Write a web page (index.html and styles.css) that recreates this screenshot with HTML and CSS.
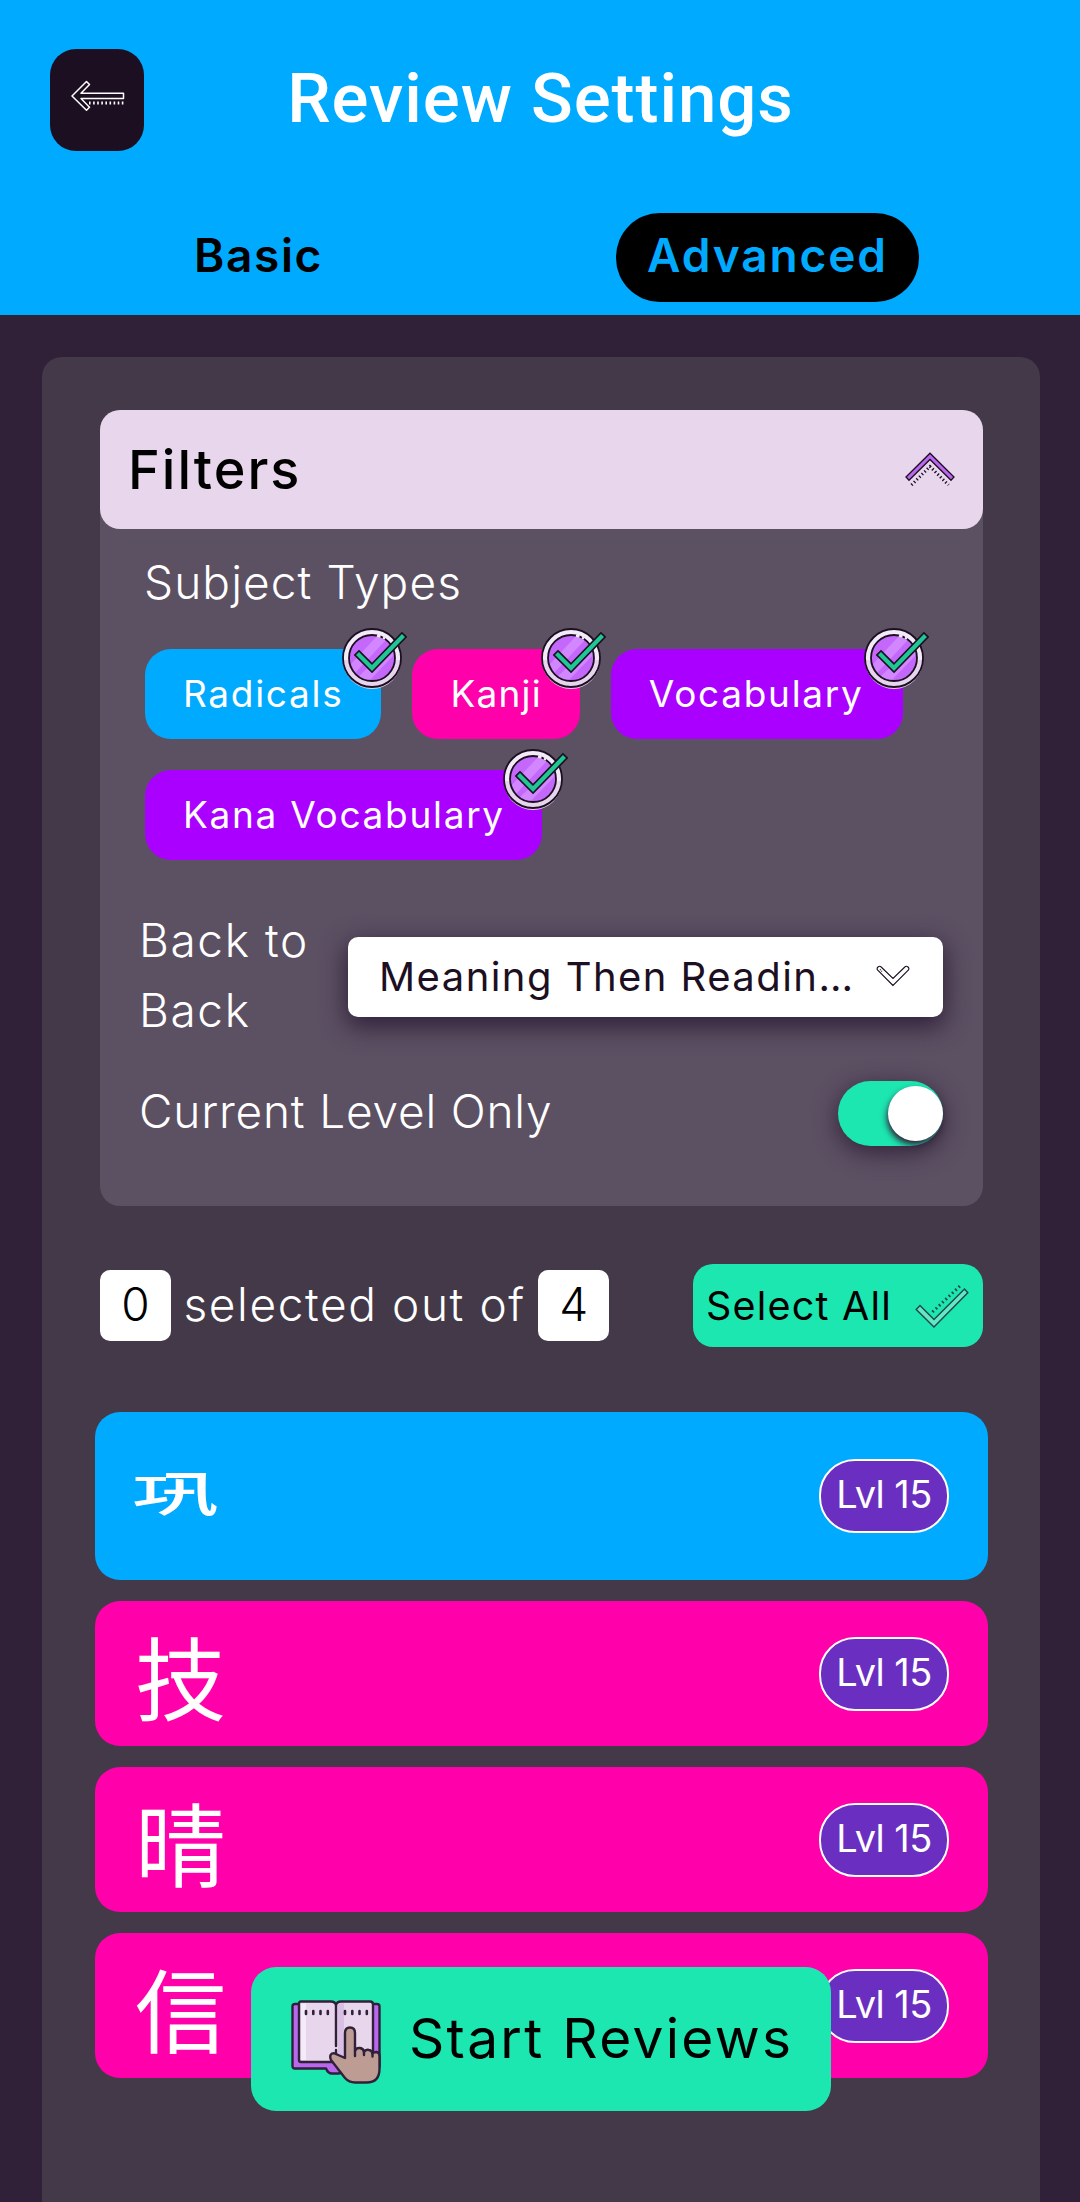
FILE: index.html
```html
<!DOCTYPE html>
<html lang="en">
<head>
<meta charset="utf-8">
<title>Review Settings</title>
<link rel="stylesheet" href="styles.css">
</head>
<body>
<svg class="defs" aria-hidden="true">
  <symbol id="badge" viewBox="0 0 66 62">
    <circle cx="31" cy="31" r="29" fill="#f3ebf7"/>
    <path d="M2 33a29 29 0 0 0 58 0z" fill="#e6d5ed"/>
    <circle cx="31" cy="31" r="29" fill="none" stroke="#1c0f22" stroke-width="1.8"/>
    <circle cx="31" cy="31" r="23" fill="#c468fb"/>
    <path d="M10 37 36 9l9 4-31 33zM17 50 51 18l3 9-26 27z" fill="#d286ff"/>
    <circle cx="31" cy="31" r="23" fill="none" stroke="#1c0f22" stroke-width="1.8"/>
    <path d="M36 8.500l3.500 1M42 10.500l2 1.200" stroke="#f3ebf7" stroke-width="2.500"/>
    <path d="M18 28 31 41 61 10" fill="none" stroke="#1c0f22" stroke-width="7.500" stroke-linecap="square"/>
    <path d="M18 28 31 41 61 10" fill="none" stroke="#1fc795" stroke-width="4.200" stroke-linecap="square"/>
  </symbol>
</svg>

<header class="header">
  <div class="topbar">
    <button class="back" aria-label="Back">
      <svg width="54" height="32" viewBox="0 0 54 32" fill="none" stroke="#fff" stroke-width="1.500" stroke-linejoin="round">
        <path d="M1 16 15.500 1.500l3 3L10 13.300h42.500v5.200H10l8.500 8.700-3 3z"/>
        <path d="M18 23h35" stroke-width="3" stroke-dasharray="1.600 2.500"/>
      </svg>
    </button>
    <h1 class="title">Review Settings</h1>
  </div>
  <nav class="tabs">
    <a class="tab basic">Basic</a>
    <a class="tab active">Advanced</a>
  </nav>
</header>

<main class="page">
  <section class="panel">
    <div class="filters">
      <div class="filters-head">
        <h2>Filters</h2>
        <svg width="50" height="36" viewBox="0 0 50 36" fill="none" stroke="#1c0f22">
          <path d="M1 25 25 1.200 49 25l-3 3.200L25 7.500 4 28.200z" fill="#b968ee" stroke-width="1.300"/>
          <path d="M6.500 33 25 14.500 43.500 33" stroke-width="3" stroke-dasharray="1.300 2.400"/>
        </svg>
      </div>
      <h3>Subject Types</h3>
      <div class="chips">
        <span class="chip radical">Radicals<svg class="badge"><use href="#badge"/></svg></span>
        <span class="chip kanji">Kanji<svg class="badge"><use href="#badge"/></svg></span>
        <span class="chip vocab">Vocabulary<svg class="badge"><use href="#badge"/></svg></span>
        <span class="chip vocab">Kana Vocabulary<svg class="badge"><use href="#badge"/></svg></span>
      </div>
      <div class="option b2b">
        <span class="label">Back to Back</span>
        <div class="select">
          <span>Meaning Then Readin…</span>
          <svg width="34" height="22" viewBox="0 0 34 22" fill="none" stroke="#1c0f22" stroke-width="1.100">
            <path d="M17 20.500 1.500 5Q.500 3.500 2 2q1.800-1.500 3.200 0L17 13.500 28.800 2q1.400-1.500 3.200 0 1.500 1.500.500 3z"/>
            <path d="M4 4.500l2 2" stroke-dasharray="1 1"/>
          </svg>
        </div>
      </div>
      <div class="option level">
        <span class="label">Current Level Only</span>
        <span class="toggle"><i></i></span>
      </div>
    </div>

    <div class="summary">
      <span class="count">0</span>
      <span class="summary-text">selected out of</span>
      <span class="count">4</span>
      <button class="select-all"><span>Select All</span>
        <svg width="54" height="46" viewBox="0 0 54 46" fill="none" stroke="#1f4a4c" stroke-width="1.500">
          <path d="M1.200 26.500 5 22.500 19 36.500 49.500 6l3.300 3.800L19 44z" fill="#63e8c4"/>
          <path d="M17.500 29 46.500 1.500" stroke-width="3" stroke-dasharray="1.700 2.800"/>
        </svg>
      </button>
    </div>

    <ul class="subjects">
      <li class="subject radical tall"><span class="glyph squat" lang="ja">巩</span><span class="lvl">Lvl 15</span></li>
      <li class="subject kanji"><span class="glyph" lang="ja">技</span><span class="lvl">Lvl 15</span></li>
      <li class="subject kanji"><span class="glyph" lang="ja">晴</span><span class="lvl">Lvl 15</span></li>
      <li class="subject kanji"><span class="glyph" lang="ja">信</span><span class="lvl">Lvl 15</span></li>
    </ul>
  </section>
</main>

<button class="start">
  <svg width="90" height="84" viewBox="0 0 90 84" stroke="#302139" stroke-width="2.400" stroke-linejoin="round" stroke-linecap="round">
    <path d="M4 4h82q2.500 0 2.500 2.500V66q0 2.500-2.500 2.500H53q-2 5-6 5h-6q-4 0-6-5H4Q1.500 68.500 1.500 66V6.500Q1.500 4 4 4z" fill="#b968ee"/>
    <path d="M10 1.500h30q4 0 5 3.500 1-3.500 5-3.500h29q3 0 3 3V62H10q-2 0-2-2V4q0-2.500 2-2.500z" fill="#e8d6ed"/>
    <path d="M10 3.500h5V60h-5z" fill="#f3ebf7" stroke="none"/>
    <path d="M47 5q1-2 6-2v58h-6z" fill="#d9bfe4" stroke="none"/>
    <path d="M45 5v41M45 50v12" fill="none"/>
    <path d="M15 11v3M22.300 11v3M29.500 11v3M36.800 11v3M54 11v3M61.300 11v3M68.500 11v3M75.800 11v3" fill="none" stroke-width="2.600"/>
    <path d="M54 58V33q0-5.500 5-5.500T64 33v18q1-3.500 5-3 3.500.500 4 4 1.500-3 5-2 3 .500 3.500 3.500 1-1.500 4-1.500 3 .500 3 4v13q0 13.500-13 13.500H64q-6 0-10-4.500L40 60q-2-4.500 1-6.500 2.500-1 5 1z" fill="#bd9c94"/>
    <path d="M64 51v5M73 52v3M81.500 53.500v3" fill="none"/>
  </svg>
  <span>Start Reviews</span>
</button>
</body>
</html>
```
FILE: styles.css
```css
* { box-sizing: border-box; }

body {
  margin: 0;
  min-height: 2202px;
  display: flex;
  flex-direction: column;
  background: #302139;
  color: #fff;
  font-family: Inter, "Noto Sans CJK JP", sans-serif;
}

h1, h2, h3, ul { margin: 0; padding: 0; }
button { border: 0; padding: 0; font: inherit; color: inherit; }
svg { display: block; flex: none; }
.defs { position: absolute; width: 0; height: 0; }

.header { height: 315px; background: #0af; }

.topbar {
  display: grid;
  grid-template-columns: 94px 1fr 94px;
  padding: 49px 50px 0;
  height: 213px;
  align-items: start;
}

.back {
  height: 102px;
  border-radius: 26px;
  background: #1c0f22;
  display: flex;
  align-items: center;
  justify-content: center;
  padding: 0 0 8px 1px;
}

.title {
  font: 500 69px/100px Roboto, sans-serif;
  letter-spacing: .95px;
  text-align: center;
  padding-left: 1px;
}

.tabs {
  display: grid;
  grid-template-columns: 509px 509px;
  justify-items: center;
  padding-left: 4px;
}

.tab {
  height: 89px;
  line-height: 85px;
  padding: 0 32px;
  border-radius: 44px;
  font-size: 46px;
  font-weight: 600;
  color: #000;
  letter-spacing: 1.6px;
}

.tab.active { background: #000; color: #0af; letter-spacing: 1.9px; padding: 0 31.5px; }

.page { flex: 1; padding: 42px 40px 0 42px; display: flex; }

.panel {
  flex: 1;
  padding: 53px 57px 0 58px;
  background: #433948;
  border-radius: 20px 20px 0 0;
}

.filters {
  background: #5c5063;
  border-radius: 20px;
  padding-bottom: 60px;
}

.filters-head {
  display: flex;
  align-items: center;
  justify-content: space-between;
  height: 119px;
  padding: 0 28px;
  border-radius: 20px;
  background: #e8d6ed;
  color: #000;
}

.filters-head h2 { font-size: 54px; font-weight: 500; letter-spacing: 2px; }

.filters h3 {
  margin: 18px 0 32px 44px;
  font-size: 46px;
  font-weight: 300;
  line-height: 70px;
  letter-spacing: 1.1px;
}

.chips { display: flex; flex-wrap: wrap; gap: 31px; padding: 0 45px; }

.chip {
  position: relative;
  height: 90px;
  line-height: 89px;
  padding: 0 37px 0 38px;
  border-radius: 26px;
  font-size: 37px;
  letter-spacing: 1.7px;
}

.radical { background: #0af; }
.kanji { background: #f0a; }
.vocab { background: #a0f; }

.chip.radical { padding-right: 38px; }
.chip.kanji { padding: 0 38px; letter-spacing: 1.2px; }
.chip:nth-child(3) { padding-right: 39px; }

.badge { position: absolute; top: -22.5px; right: -26px; width: 66px; height: 62px; }

.option {
  display: flex;
  align-items: center;
  justify-content: space-between;
  padding: 0 40px 0 39px;
}

.label { font-size: 46px; font-weight: 300; line-height: 70px; letter-spacing: .8px; }

.b2b { margin-top: 45px; }
.b2b .label { width: 190px; letter-spacing: 1.6px; }

.select {
  display: flex;
  align-items: center;
  justify-content: space-between;
  width: 595px;
  height: 80px;
  margin-top: 4px;
  padding: 0 33px 2px 31px;
  border-radius: 10px;
  background: #fff;
  color: #1c0f22;
  font-size: 40px;
  letter-spacing: 1.45px;
  box-shadow: 0 8px 24px 2px #302139;
}

.level { margin-top: 36px; height: 65px; }
.level .label { padding-bottom: 5px; }

.toggle {
  display: flex;
  align-items: center;
  justify-content: flex-end;
  width: 105px;
  height: 65px;
  border-radius: 33px;
  background: #1ce7b1;
  box-shadow: 0 6px 24px #302139;
}

.toggle i {
  width: 55px;
  height: 55px;
  border-radius: 50%;
  background: #fff;
  box-shadow: -1px 4px 6px #302139;
}

.summary {
  display: flex;
  align-items: center;
  height: 83px;
  margin-top: 58px;
  gap: 12.5px;
  font-size: 46px;
  font-weight: 300;
}

.count {
  width: 71px;
  height: 71px;
  line-height: 69px;
  border-radius: 10px;
  background: #fff;
  color: #000;
  text-align: center;
}

.summary-text { letter-spacing: 1.6px; line-height: 70px; padding-bottom: 4px; }

.select-all {
  display: flex;
  align-items: center;
  justify-content: space-between;
  width: 290px;
  height: 83px;
  margin-left: auto;
  padding: 0 14px 0 13px;
  border-radius: 20px;
  background: #1ce7b1;
  color: #000;
  font-size: 39.5px;
  font-weight: 400;
  letter-spacing: 1.2px;
}

.subjects {
  display: grid;
  gap: 21px;
  margin: 65px -5px 0;
  list-style: none;
}

.subject {
  display: flex;
  align-items: center;
  justify-content: space-between;
  height: 145px;
  padding: 0 39px 0 40px;
  border-radius: 25px;
}

.tall { height: 168px; }

.glyph { font: 400 91px/120px "Noto Sans CJK JP", sans-serif; }
.squat { font-weight: 500; font-size: 86px; transform: translate(-3px, -5px) scaleY(.55); }

.lvl {
  width: 130px;
  height: 74px;
  line-height: 66px;
  border: 2px solid #fff;
  border-radius: 36px;
  background: #6a2ec0;
  text-align: center;
  font-size: 38px;
  letter-spacing: -.6px;
}

.start {
  position: fixed;
  left: 251px;
  bottom: 91px;
  display: flex;
  align-items: center;
  gap: 28px;
  width: 580px;
  height: 144px;
  padding: 0 0 2px 40px;
  border-radius: 25px;
  background: #1ce7b1;
  color: #000;
  font-size: 55px;
  letter-spacing: 2.3px;
}

.start svg { margin-top: 7px; }
```
